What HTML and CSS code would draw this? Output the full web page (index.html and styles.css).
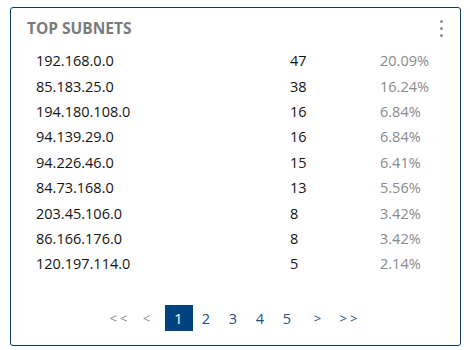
FILE: index.html
```html
<!DOCTYPE html>
<html>
<head>
<meta charset="utf-8">
<link rel="stylesheet" href="styles.css">
</head>
<body>
<div class="card">
  <div class="header">
    <h2 class="title">TOP SUBNETS</h2>
    <div class="kebab"><span></span><span></span><span></span></div>
  </div>
  <div class="rows">
    <div class="row"><span class="ip">192.168.0.0</span><span class="count">47</span><span class="pct">20.09%</span></div>
    <div class="row"><span class="ip">85.183.25.0</span><span class="count">38</span><span class="pct">16.24%</span></div>
    <div class="row"><span class="ip">194.180.108.0</span><span class="count">16</span><span class="pct">6.84%</span></div>
    <div class="row"><span class="ip">94.139.29.0</span><span class="count">16</span><span class="pct">6.84%</span></div>
    <div class="row"><span class="ip">94.226.46.0</span><span class="count">15</span><span class="pct">6.41%</span></div>
    <div class="row"><span class="ip">84.73.168.0</span><span class="count">13</span><span class="pct">5.56%</span></div>
    <div class="row"><span class="ip">203.45.106.0</span><span class="count">8</span><span class="pct">3.42%</span></div>
    <div class="row"><span class="ip">86.166.176.0</span><span class="count">8</span><span class="pct">3.42%</span></div>
    <div class="row"><span class="ip">120.197.114.0</span><span class="count">5</span><span class="pct">2.14%</span></div>
  </div>
  <div class="pager">
    <span class="pg nav first muted">&lt;&lt;</span>
    <span class="pg nav prev muted">&lt;</span>
    <span class="pg num active">1</span>
    <span class="pg num">2</span>
    <span class="pg num">3</span>
    <span class="pg num">4</span>
    <span class="pg num">5</span>
    <span class="pg nav next">&gt;</span>
    <span class="pg nav last">&gt;&gt;</span>
  </div>
</div>
</body>
</html>
```
FILE: styles.css
```css
html, body {
  margin: 0;
  padding: 0;
  background: #ffffff;
}
body {
  padding: 7px 9px 0 10px;
  font-family: "Open Sans", "Segoe UI", sans-serif;
}
.card {
  box-sizing: border-box;
  width: 451px;
  height: 339px;
  border: 1.5px solid #0c3a6b;
  border-radius: 3px;
  display: flex;
  flex-direction: column;
}
.header {
  display: flex;
  justify-content: space-between;
  align-items: flex-start;
  padding: 10px 17px 0 16px;
  height: 30px;
}
.title {
  margin: 0;
  font-size: 15.5px;
  font-weight: 700;
  color: #7b7b7b;
  line-height: 20px;
}
.kebab {
  display: flex;
  flex-direction: column;
  gap: 4px;
  padding-top: 2px;
}
.kebab span {
  width: 3px;
  height: 3px;
  border-radius: 50%;
  background: #8c8c8c;
}
.rows {
  display: flex;
  flex-direction: column;
  padding-left: 25px;
}
.row {
  display: grid;
  grid-template-columns: 254px 90px 1fr;
  height: 25.4px;
  align-items: center;
  font-size: 14.5px;
  color: #141414;
}
.pct {
  color: #8a8a8a;
}
.pager {
  margin-top: auto;
  margin-bottom: 14px;
  display: flex;
  justify-content: center;
  align-items: center;
  padding-right: 4px;
  font-size: 14.5px;
}
.pg {
  height: 26px;
  display: flex;
  align-items: center;
  justify-content: center;
}
.num {
  width: 27px;
  color: #1c4f8c;
}
.num.active {
  width: 28px;
  background: #00437f;
  color: #ffffff;
}
.nav {
  color: #1c4f8c;
  font-size: 13px;
}
.nav.first, .nav.last {
  width: 28px;
  letter-spacing: 3px;
  text-indent: 3px;
}
.nav.prev {
  width: 28px;
  margin-right: 4px;
}
.nav.next {
  width: 34px;
}
.nav.muted {
  color: #8a8a8a;
}
```
